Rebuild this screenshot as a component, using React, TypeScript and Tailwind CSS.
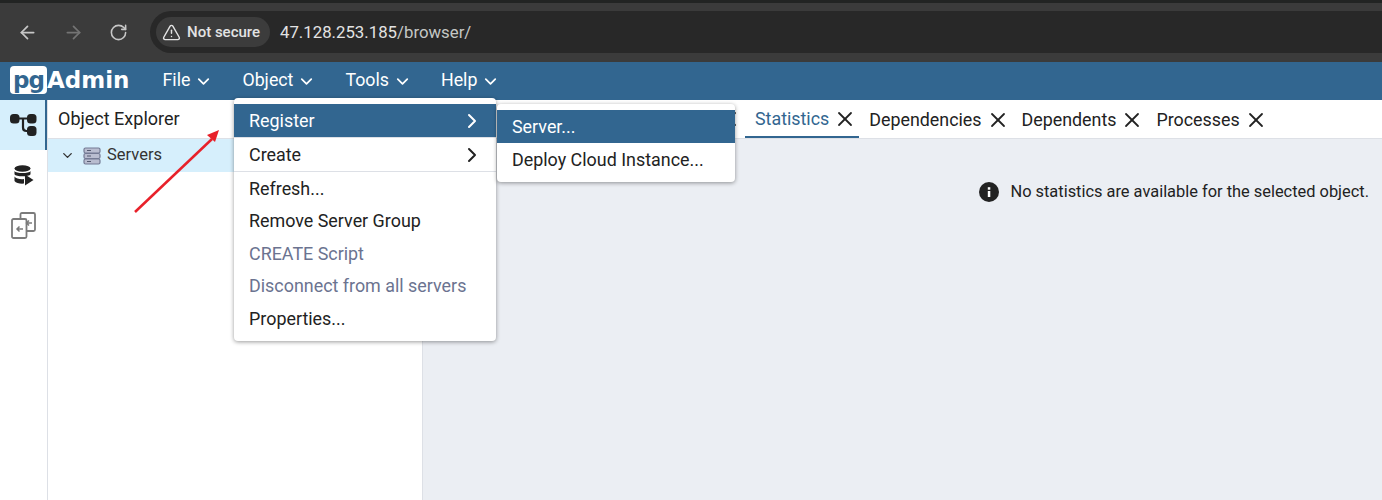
import { ArrowLeft, ArrowRight, RotateCw, TriangleAlert, ChevronDown, ChevronRight, X } from "lucide-react";

const font = "font-['Roboto',sans-serif]";

function NavItem({ label }: { label: string }) {
  return (
    <div className="flex items-center gap-[4px] px-[14.5px] text-[17.8px] text-white">
      <span>{label}</span>
      <ChevronDown size={19} strokeWidth={2.2} className="mt-[2px]" />
    </div>
  );
}

function Tab({ label, active }: { label: string; active?: boolean }) {
  return (
    <div className={`flex h-[38px] shrink-0 items-center gap-[4px] pl-[10px] pr-[2px] pt-[2px] text-[17.85px] ${active ? "border-b-2 border-[#326690] text-[#326690]" : "text-[#222222]"}`}>
      <span className="pt-[1px]">{label}</span>
      <X size={24} strokeWidth={1.8} className="text-[#222222]" />
    </div>
  );
}

function NodesIcon() {
  return (
    <svg width="27" height="24" viewBox="0 0 27 24" fill="none">
      <rect x="0" y="1" width="9.5" height="9.5" rx="3.5" fill="#222" />
      <rect x="17" y="1" width="9.5" height="9.5" rx="3.5" fill="#222" />
      <rect x="17" y="13" width="9.5" height="10" rx="3.5" fill="#222" />
      <path d="M8 5.5H18M13 5.5V14.5Q13 18 16.5 18H18" stroke="#222" strokeWidth="2.2" />
    </svg>
  );
}

function DbIcon() {
  return (
    <svg width="20" height="21" viewBox="0 0 20 21" fill="#222">
      <ellipse cx="8.5" cy="3.5" rx="8" ry="3.2" />
      <path d="M0.5 6C2 8.8 15 8.8 16.5 6V9.2C15 12 2 12 0.5 9.2Z" />
      <path d="M0.5 11.5C2 14 7 14.5 10 14V18.6C6 19 2 18 0.5 16Z" />
      <path d="M11 9.5L19.5 15L11 20.5Z" />
    </svg>
  );
}

function SwapIcon() {
  return (
    <svg width="25" height="27" viewBox="0 0 25 27" fill="none" stroke="#7b7b7b" strokeWidth="1.8">
      <path d="M9.5 6.5V2.5Q9.5 1 11 1H22.5Q24 1 24 2.5V17.5Q24 19 22.5 19H15.5" />
      <rect x="1" y="7" width="14.5" height="19" rx="1.5" />
      <path d="M21 11H15.5M18 8.5L15.5 11L18 13.5M12 17H6M8.5 14.5L6 17L8.5 19.5" strokeWidth="1.5" />
    </svg>
  );
}

function ServerIcon() {
  return (
    <svg width="18" height="18" viewBox="0 0 18 18" fill="#b9bdd0" stroke="#747a94" strokeWidth="1.2">
      <rect x="1" y="1" width="16" height="5" rx="1.5" />
      <rect x="1" y="6.5" width="16" height="5" rx="1.5" />
      <rect x="1" y="12" width="16" height="5" rx="1.5" />
      <path d="M4 3.5H8M4 9H8M4 14.5H8" strokeWidth="1" stroke="#555a70" />
    </svg>
  );
}

function InfoIcon() {
  return (
    <svg width="20" height="20" viewBox="0 0 20 20">
      <circle cx="10" cy="10" r="10" fill="#222222" />
      <rect x="8.8" y="9" width="2.5" height="6" fill="#ffffff" />
      <rect x="8.8" y="5.2" width="2.5" height="2.5" fill="#ffffff" />
    </svg>
  );
}

function MenuItem({ label, tone = "normal", arrow, h = "h-[32.5px]", pad = "pt-[1px]" }: { label: string; tone?: "normal" | "active" | "muted"; arrow?: boolean; h?: string; pad?: string }) {
  const cls = tone === "active" ? "bg-[#326690] text-white" : tone === "muted" ? "text-[#6b7390]" : "text-[#222222]";
  return (
    <div className={`flex items-center justify-between pl-[15px] pr-[12px] text-[17.9px] ${h} ${cls}`}>
      <span className={pad}>{label}</span>
      {arrow && <ChevronRight size={24} strokeWidth={2} />}
    </div>
  );
}

export default function App() {
  return (
    <div className={`relative flex h-[500px] w-[1382px] flex-col overflow-hidden bg-white ${font}`}>
      {/* Browser chrome */}
      <div className="h-[3px] bg-[#222423]" />
      <div className="flex h-[59px] items-start bg-[#3b3b3b] pl-[17px] pt-[8px]">
        <div className="flex h-[42px] w-[133px] shrink-0 items-center gap-[25px] text-[#c7c7c7]">
          <ArrowLeft size={21} strokeWidth={2} />
          <ArrowRight size={21} strokeWidth={2} className="text-[#747474]" />
          <RotateCw size={19} strokeWidth={2} />
        </div>
        <div className="flex h-[42px] flex-1 items-center gap-[10px] rounded-l-[21px] bg-[#282828] pl-[6px]">
          <div className="flex h-[30px] w-[114px] items-center gap-[6px] rounded-[15px] bg-[#3c3c3c] pl-[6px] text-[15px] font-medium text-[#e3e3e3]">
            <TriangleAlert size={19} strokeWidth={1.8} />
            <span>Not secure</span>
          </div>
          <div className="pt-[1px] text-[16.8px] text-[#e3e3e3]">
            47.128.253.185<span className="text-[#c4c7c5]">/browser/</span>
          </div>
        </div>
      </div>

      {/* pgAdmin header */}
      <div className="flex h-[38px] items-center bg-[#326690] pl-[10px]">
        <div className="flex h-[28px] w-[37px] -translate-y-[1px] items-center justify-center rounded-[4px] bg-white font-['DejaVu_Sans',sans-serif] text-[23px] font-bold leading-none tracking-[-1px] text-[#326690]">
          pg
        </div>
        <div className="-translate-y-[1px] font-['DejaVu_Sans',sans-serif] text-[23px] font-bold leading-none text-white">Admin</div>
        <div className="ml-[18.5px] flex pb-[2px]">
          <NavItem label="File" />
          <NavItem label="Object" />
          <NavItem label="Tools" />
          <NavItem label="Help" />
        </div>
      </div>

      {/* Body */}
      <div className="flex flex-1">
        <div className="w-[48px] shrink-0 border-r border-[#dde0e6]">
          <div className="flex h-[50px] items-center justify-center border-r-2 border-[#326690] bg-[#d6effc] pl-[2px]">
            <NodesIcon />
          </div>
          <div className="flex h-[50px] items-center justify-center pt-[1px]">
            <DbIcon />
          </div>
          <div className="flex h-[50px] items-center justify-center pr-[1px] pt-[1px]">
            <SwapIcon />
          </div>
        </div>

        <div className="w-[375px] shrink-0 border-r border-[#dde0e6]">
          <div className="flex h-[39px] items-center border-b border-[#dde0e6] pb-[2px] pl-[10px] text-[18px] text-[#222222]">Object Explorer</div>
          <div className="flex h-[33px] items-center bg-[#d6effc] pl-[12px] text-[16.5px] text-[#333333]">
            <ChevronDown size={15} strokeWidth={2.2} />
            <span className="ml-[8px]"><ServerIcon /></span>
            <span className="ml-[6px]">Servers</span>
          </div>
        </div>

        <div className="flex flex-1 flex-col bg-[#ebeef3]">
          <div className="flex h-[39px] border-b border-[#dde0e6] bg-white">
            <div className="flex w-[322px] shrink-0 items-center justify-end pr-[4px]">
              <X size={24} strokeWidth={1.8} className="text-[#222222]" />
            </div>
            <Tab label="Statistics" active />
            <Tab label="Dependencies" />
            <Tab label="Dependents" />
            <Tab label="Processes" />
          </div>
          <div className="flex justify-end pr-[13px] pt-[41px] text-[16.4px] text-[#222222]">
            <div className="flex h-[24px] items-center gap-[11px]">
              <InfoIcon />
              <span>No statistics are available for the selected object.</span>
            </div>
          </div>
        </div>
      </div>

      {/* Object menu */}
      <div className="absolute left-[234px] top-[98px] w-[262px] rounded-[4px] bg-white pb-[5px] pt-[6px] shadow-[0_1px_4px_rgba(0,0,0,0.4)]">
        <div className="border-b border-[#dde0e6]">
          <MenuItem label="Register" tone="active" arrow h="h-[33px]" />
        </div>
        <div className="mb-[1px] border-b border-[#dde0e6]">
          <MenuItem label="Create" arrow h="h-[33px]" />
        </div>
        <MenuItem label="Refresh..." />
        <MenuItem label="Remove Server Group" pad="" />
        <MenuItem label="CREATE Script" tone="muted" />
        <MenuItem label="Disconnect from all servers" tone="muted" pad="" />
        <MenuItem label="Properties..." />
      </div>

      {/* Register submenu */}
      <div className="absolute left-[497px] top-[104px] w-[238px] rounded-[4px] bg-white py-[6px] shadow-[0_1px_4px_rgba(0,0,0,0.4)]">
        <MenuItem label="Server..." tone="active" h="h-[33px]" />
        <MenuItem label="Deploy Cloud Instance..." h="h-[33px]" />
      </div>

      {/* Annotation arrow */}
      <svg className="absolute left-[130px] top-[125px]" width="96" height="92" viewBox="0 0 96 92" fill="none">
        <path d="M5 87L82 14" stroke="#e8212a" strokeWidth="2.5" />
        <path d="M89 5L77 10L85 17Z" fill="#e8212a" />
      </svg>
    </div>
  );
}
